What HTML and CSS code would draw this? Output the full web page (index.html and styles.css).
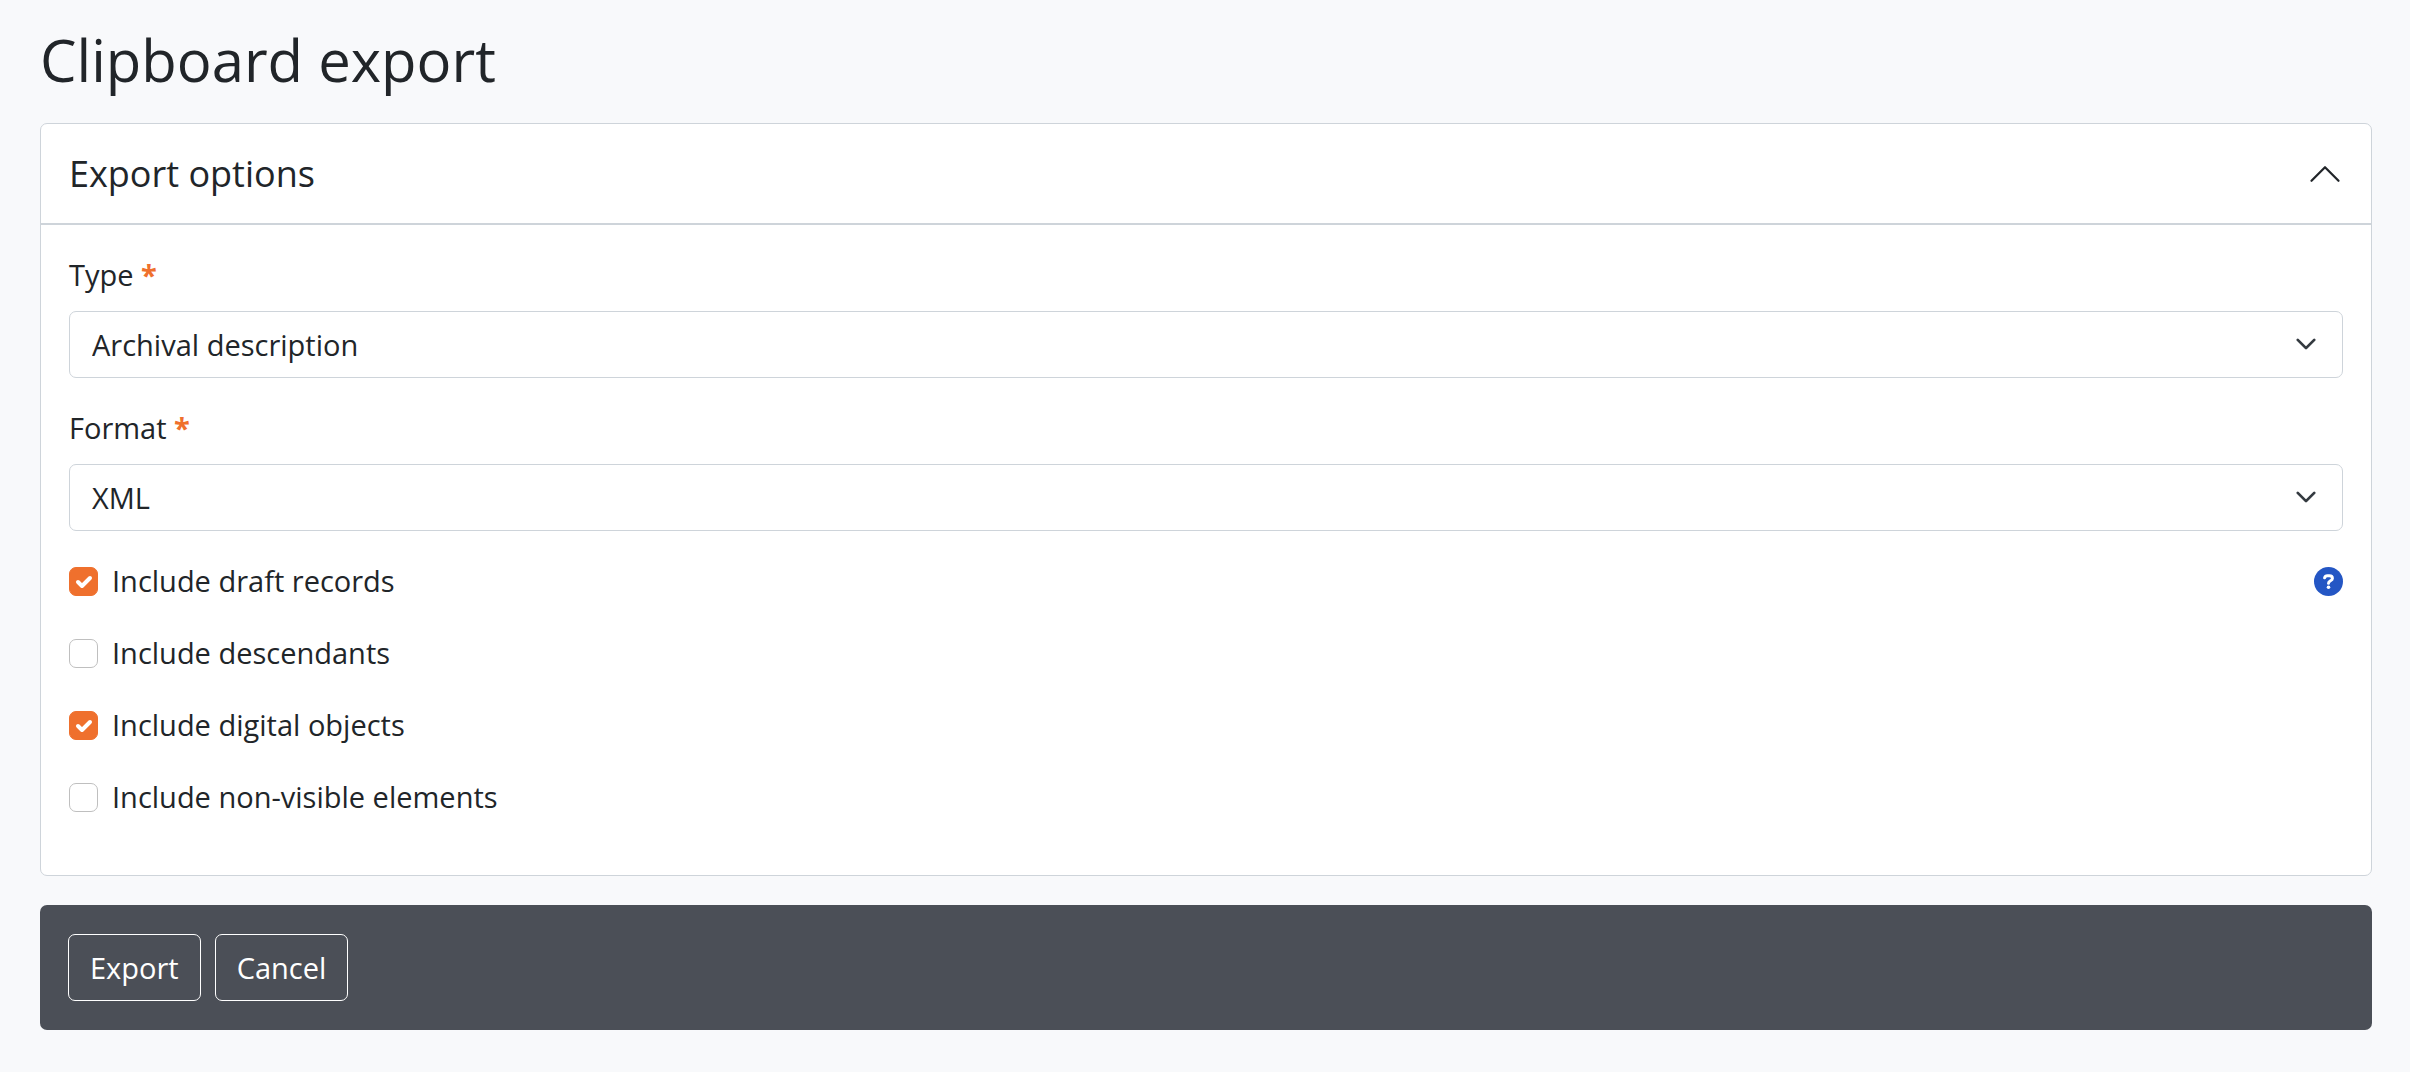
FILE: index.html
```html
<!DOCTYPE html>
<html lang="en">

<head>
    <meta charset="UTF-8">
    <meta name="viewport" content="width=device-width, initial-scale=1.0">
    <title>Clipboard export</title>
    <link rel="stylesheet" href="styles.css">
</head>

<body>
    <main class="wrapper">
        <h1>Clipboard export</h1>
        <form id="export-form">
            <section class="card">
                <h2 class="card-header">
                    <button type="button" class="toggle" id="toggle" aria-expanded="true" aria-controls="options">
                        Export options
                        <svg class="toggle-icon" viewBox="0 0 16 16" aria-hidden="true">
                            <path d="M2 11l6-6 6 6" />
                        </svg>
                    </button>
                </h2>
                <div class="card-body" id="options">
                    <div class="field">
                        <label for="type">Type <span class="required">*</span></label>
                        <div class="select-box">
                            <select id="type" name="type" required>
                                <option selected>Archival description</option>
                                <option>Authority record</option>
                                <option>Archival institution</option>
                            </select>
                            <svg class="select-icon" viewBox="0 0 16 16" aria-hidden="true">
                                <path d="M2 5l6 6 6-6" />
                            </svg>
                        </div>
                    </div>
                    <div class="field">
                        <label for="format">Format <span class="required">*</span></label>
                        <div class="select-box">
                            <select id="format" name="format" required>
                                <option selected>XML</option>
                                <option>CSV</option>
                            </select>
                            <svg class="select-icon" viewBox="0 0 16 16" aria-hidden="true">
                                <path d="M2 5l6 6 6-6" />
                            </svg>
                        </div>
                    </div>
                    <div class="check-row">
                        <label class="check"><input type="checkbox" name="drafts" checked>
                            <svg class="tick" viewBox="0 0 29 29" aria-hidden="true"><path d="M9 15l4 4 8-8" /></svg>
                            Include draft records</label>
                        <button type="button" class="help" aria-label="Help">
                            <svg viewBox="0 0 29 29" aria-hidden="true">
                                <circle cx="14.5" cy="14.5" r="14.5" />
                                <path d="M10.6 10.8C11 9.4 12 8.8 13.4 8.8H15.4C17.2 8.8 18.4 9.9 18.4 11.4C18.4 13.9 14.5 13.7 14.5 16.2" />
                                <circle class="dot" cx="14.5" cy="20.2" r="1.8" />
                            </svg>
                        </button>
                    </div>
                    <div class="check-row">
                        <label class="check"><input type="checkbox" name="descendants">
                            <svg class="tick" viewBox="0 0 29 29" aria-hidden="true"><path d="M9 15l4 4 8-8" /></svg>
                            Include descendants</label>
                    </div>
                    <div class="check-row">
                        <label class="check"><input type="checkbox" name="objects" checked>
                            <svg class="tick" viewBox="0 0 29 29" aria-hidden="true"><path d="M9 15l4 4 8-8" /></svg>
                            Include digital objects</label>
                    </div>
                    <div class="check-row">
                        <label class="check"><input type="checkbox" name="hidden">
                            <svg class="tick" viewBox="0 0 29 29" aria-hidden="true"><path d="M9 15l4 4 8-8" /></svg>
                            Include non-visible elements</label>
                    </div>
                </div>
            </section>
            <div class="actions">
                <button type="submit" class="btn">Export</button>
                <button type="button" class="btn">Cancel</button>
            </div>
        </form>
    </main>
    <script>
        let toggle = document.querySelector('#toggle');
        let options = document.querySelector('#options');
        // open and close the options
        toggle.onclick = function () {
            options.hidden = !options.hidden;
            toggle.setAttribute('aria-expanded', !options.hidden);
        }
    </script>
</body>

</html>
```
FILE: styles.css
```css
* {
    margin: 0;
    padding: 0;
    box-sizing: border-box;
}

body {
    background: #f8f9fb;
    color: #212529;
    font: 29px/44px "Open Sans", "Noto Sans", sans-serif;
}

button,
select {
    font: inherit;
    color: inherit;
}

svg {
    fill: none;
    stroke: currentColor;
    stroke-linecap: round;
    stroke-linejoin: round;
}

.wrapper {
    padding: 24px 38px 24px 40px;
}

h1 {
    margin-bottom: 27px;
    font-size: 58px;
    font-weight: 400;
    line-height: 72px;
}

.card {
    margin-bottom: 29px;
    background: #fff;
    border: 1px solid #ced4da;
    border-radius: 7px;
}

.card-header {
    border-bottom: 2px solid #ced4da;
}

.toggle {
    display: flex;
    justify-content: space-between;
    align-items: center;
    width: 100%;
    padding: 28px;
    border: 0;
    background: none;
    font-size: 36px;
    font-weight: 400;
    line-height: 43px;
    cursor: pointer;
}

.toggle-icon {
    width: 36px;
    height: 36px;
}

.toggle[aria-expanded="false"] .toggle-icon {
    transform: rotate(180deg);
}

.card-body {
    padding: 28px;
}

.card-body[hidden] {
    display: none;
}

.field {
    margin-bottom: 28px;
}

.field label {
    display: block;
    margin-bottom: 14px;
}

.required {
    color: #ef702d;
    font-weight: 700;
}

.select-box {
    position: relative;
}

.select-box select {
    display: block;
    width: 100%;
    height: 67px;
    padding: 0 65px 0 22px;
    border: 1px solid #ced4da;
    border-radius: 7px;
    background: #fff;
    appearance: none;
}

.select-icon {
    position: absolute;
    top: 22px;
    right: 26px;
    width: 22px;
    height: 22px;
    color: #343a40;
    stroke-width: 2;
    pointer-events: none;
}

.check-row {
    display: flex;
    justify-content: space-between;
    align-items: center;
    margin-bottom: 28px;
}

.check {
    position: relative;
    display: flex;
    align-items: center;
    gap: 14px;
}

.check input {
    width: 29px;
    height: 29px;
    border: 1px solid #bfbfbf;
    border-radius: 7px;
    background: #fff;
    appearance: none;
}

.check input:checked {
    border-color: #ef702d;
    background: #ef702d;
}

.tick {
    display: none;
    position: absolute;
    left: 0;
    width: 29px;
    height: 29px;
    color: #fff;
    stroke-width: 4;
}

.check input:checked + .tick {
    display: block;
}

.help {
    display: flex;
    width: 29px;
    height: 29px;
    border: 0;
    background: none;
    color: #fff;
    cursor: pointer;
}

.help svg {
    stroke-width: 3;
}

.help circle {
    fill: #2456c4;
    stroke: none;
}

.help .dot {
    fill: #fff;
}

.actions {
    display: flex;
    gap: 14px;
    padding: 29px 28px;
    border-radius: 7px;
    background: #4b4f57;
}

.btn {
    height: 67px;
    padding: 0 21px;
    border: 1px solid #fff;
    border-radius: 7px;
    background: none;
    color: #fff;
    cursor: pointer;
}
```
